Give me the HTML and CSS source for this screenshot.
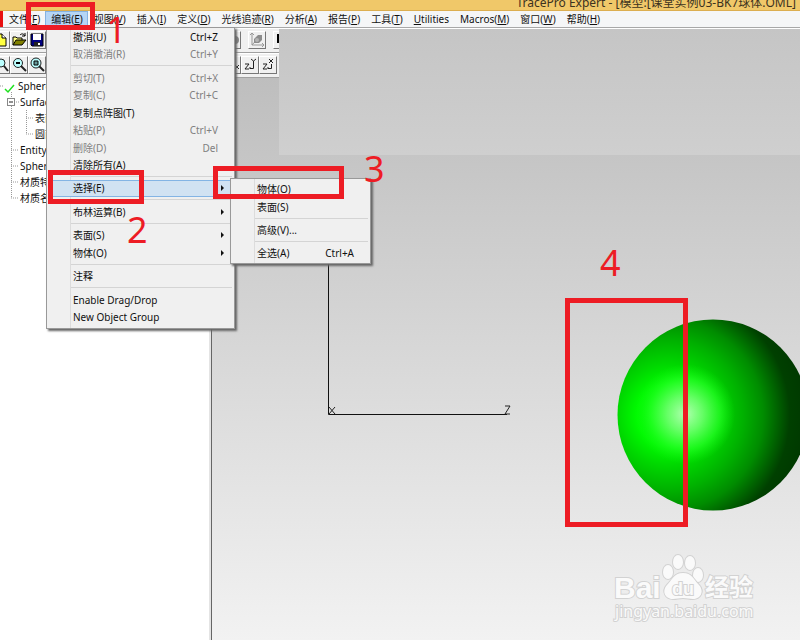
FILE: index.html
```html
<!DOCTYPE html>
<html lang="zh-CN">
<head>
<meta charset="utf-8">
<title>TracePro Expert</title>
<link rel="stylesheet" href="styles.css">
</head>
<body>
<div class="app">
  <header class="titlebar"><span>TracePro Expert - [模型:[课堂实例03-BK7球体.OML]</span></header>

  <nav class="menubar">
    <button>文件(<u>F</u>)</button>
    <button class="open">编辑(<u>E</u>)</button>
    <button>视图(<u>V</u>)</button>
    <button>插入(<u>I</u>)</button>
    <button>定义(<u>D</u>)</button>
    <button>光线追迹(<u>R</u>)</button>
    <button>分析(<u>A</u>)</button>
    <button>报告(<u>P</u>)</button>
    <button>工具(<u>T</u>)</button>
    <button><u>U</u>tilities</button>
    <button>Macros(<u>M</u>)</button>
    <button>窗口(<u>W</u>)</button>
    <button>帮助(<u>H</u>)</button>
  </nav>

  <div class="toolbar">
    <div class="tools">
      <button aria-label="新建"><svg viewBox="0 0 16 16"><path d="M3 2h6l4 4v8H3z" fill="#ffff40" stroke="#000"/><path d="M9 2v4h4" fill="#fff" stroke="#000"/></svg></button>
      <button aria-label="打开"><svg viewBox="0 0 16 16"><path d="M2 13V5h3l1 1h5v3" fill="#ffff80" stroke="#000"/><path d="M2 13l3-5h10l-4 5z" fill="#808000" stroke="#000"/><path d="M9 3c2-2 4-1 5 1m0-3v3h-3" fill="none" stroke="#000"/></svg></button>
      <button aria-label="保存"><svg viewBox="0 0 16 16"><path d="M2 2h12v12H3l-1-1z" fill="#000080" stroke="#000"/><path d="M4 2h8v6H4z" fill="#fff"/><path d="M5 10h6v4H5z" fill="#222"/><path d="M9 11h2v2H9z" fill="#fff"/></svg></button>
    </div>
    <div class="tools">
      <button aria-label="光线"><svg viewBox="0 0 16 16"><circle cx="11" cy="8" r="4" fill="#888"/></svg></button>
      <button aria-label="渲染" class="spaced"><svg viewBox="0 0 16 16"><path d="M3 1v12h12M1 3l2-2 2 2M13 11l2 2-2 2M3 13l9-10" fill="none" stroke="#999"/><path d="M5 7l4-4h4v5l-3 3H5z" fill="#8c8c8c"/><circle cx="8" cy="8" r="2" fill="#b4b4b4"/></svg></button>
      <button aria-label="颜色" class="spaced"><svg viewBox="0 0 16 16"><path d="M3 2h9v9H3z" fill="#000"/></svg></button>
    </div>
  </div>
  <div class="toolbar">
    <div class="tools">
      <button aria-label="缩放"><svg viewBox="0 0 16 16"><circle cx="8" cy="6" r="4" fill="#bff" stroke="#222"/><path d="M11 9l4 5" stroke="#222" stroke-width="2"/></svg></button>
      <button aria-label="缩小"><svg viewBox="0 0 16 16"><circle cx="7" cy="6" r="4.500" fill="#bff" stroke="#222"/><path d="M10 9l5 5" stroke="#222" stroke-width="2"/><path d="M5 6h4" stroke="#000" stroke-width="2"/></svg></button>
      <button aria-label="全部缩放"><svg viewBox="0 0 16 16"><circle cx="7" cy="6" r="5" fill="#bff" stroke="#222"/><path d="M10 9l5 5" stroke="#222" stroke-width="2"/><path d="M5 4h4v4H5z" fill="#699" stroke="#000"/></svg></button>
    </div>
    <div class="tools">
      <button aria-label="XY 视图"><svg viewBox="0 0 16 16"><path d="M11 8l4 4m0-4l-4 4" stroke="#222"/></svg></button>
      <button aria-label="YZ 视图"><svg viewBox="0 0 16 16"><path d="M3 7h4l-4 5h4M8 11.500h3.500V6M8 10v2M9 2l2.500 2v3M14 2l-2.500 2" fill="none" stroke="#222"/></svg></button>
      <button aria-label="XZ 视图"><svg viewBox="0 0 16 16"><path d="M3 7h4l-4 5h4M8 11.500h3.500V7M8 10v2M9 2l4 4M13 2l-4 4" fill="none" stroke="#222"/></svg></button>
    </div>
  </div>

  <main class="workspace">
    <aside class="tree">
      <svg class="tree-lines" viewBox="0 0 50 130" width="50" height="130">
        <g fill="none" stroke="#999" stroke-dasharray="1 1"><path d="M0 8h4M11.500 14v106M11 72h8M11 88h8M11 104h8M11 120h8M16 24h3M26.500 32v24M26 40h8M26 56h8"/></g>
        <path d="M5 11l3 3 6-7" fill="none" stroke="#1fe01f" stroke-width="1.500"/>
        <rect x="7.500" y="20.500" width="7" height="7" fill="#fff" stroke="#888"/><path d="M9 24h4" stroke="#222"/>
      </svg>
      <ul>
        <li class="root">Sphere 1</li>
        <li>Surfaces</li>
        <li class="leaf">表面 0</li>
        <li class="leaf">圆面 1</li>
        <li>Entity</li>
        <li>Sphere</li>
        <li>材质特性</li>
        <li>材质名称</li>
      </ul>
    </aside>
    <section class="viewport">
      <svg class="scene" viewBox="0 0 588 562" width="588" height="562">
        <defs>
          <radialGradient id="body" gradientUnits="userSpaceOnUse" cx="456" cy="337" r="140">
            <stop offset="0" stop-color="#00ff00"/><stop offset=".22" stop-color="#00fc00"/>
            <stop offset=".36" stop-color="#00d800"/><stop offset=".54" stop-color="#00b000"/>
            <stop offset=".68" stop-color="#008c00"/><stop offset=".78" stop-color="#006400"/>
            <stop offset=".87" stop-color="#004000"/><stop offset="1" stop-color="#003800"/>
          </radialGradient>
          <radialGradient id="shine" gradientUnits="userSpaceOnUse" cx="473" cy="336" r="50">
            <stop offset="0" stop-color="#b4ffb4"/><stop offset=".35" stop-color="#80ff80" stop-opacity=".8"/>
            <stop offset=".7" stop-color="#28ff28" stop-opacity=".7"/><stop offset="1" stop-color="#10f010" stop-opacity="0"/>
          </radialGradient>
        </defs>
        <path d="M116.500 100v236.500H295" fill="none" stroke="#111"/>
        <path d="M117 329l6 7m0-7l-6 7M293 328h5l-5 8h5" fill="none" stroke="#222"/>
        <circle cx="501" cy="337" r="95.500" fill="url(#body)"/>
        <circle cx="473" cy="336" r="50" fill="url(#shine)"/>
        <g class="watermark">
          <text x="402" y="520" class="brand">Bai</text>
          <ellipse cx="456" cy="494" rx="5" ry="7"/>
          <ellipse cx="466" cy="484" rx="5" ry="7"/>
          <ellipse cx="478" cy="485" rx="5" ry="7"/>
          <ellipse cx="486" cy="497" rx="5" ry="7"/>
          <path d="M471 495c9 0 10 6 16 12 6 7 1 14-6 14-4 0-6-1-10-1s-6 1-10 1c-7 0-12-7-6-14 6-6 7-12 16-12z"/>
          <text x="460" y="517" class="du">du</text>
          <text x="493" y="518" class="cn">经验</text>
          <text x="403" y="539" class="url">jingyan.baidu.com</text>
        </g>
      </svg>
    </section>
  </main>
  <div class="model-pane"></div>

  <div class="menu edit-menu">
    <button>撤消(U)<kbd>Ctrl+Z</kbd></button>
    <button disabled>取消撤消(R)<kbd>Ctrl+Y</kbd></button>
    <hr>
    <button disabled>剪切(T)<kbd>Ctrl+X</kbd></button>
    <button disabled>复制(C)<kbd>Ctrl+C</kbd></button>
    <button>复制点阵图(T)</button>
    <button disabled>粘贴(P)<kbd>Ctrl+V</kbd></button>
    <button disabled>删除(D)<kbd>Del</kbd></button>
    <button>清除所有(A)</button>
    <hr>
    <button class="more active">选择(E)</button>
    <hr>
    <button class="more">布林运算(B)</button>
    <hr>
    <button class="more">表面(S)</button>
    <button class="more">物体(O)</button>
    <hr>
    <button>注释</button>
    <hr>
    <button>Enable Drag/Drop</button>
    <button>New Object Group</button>
  </div>

  <div class="menu select-menu">
    <button>物体(O)</button>
    <button>表面(S)</button>
    <hr>
    <button>高级(V)...</button>
    <hr>
    <button>全选(A)<kbd>Ctrl+A</kbd></button>
  </div>

  <div class="mark mark-1"></div>
  <div class="mark mark-2"></div>
  <div class="mark mark-3"></div>
  <div class="mark mark-4"></div>
  <span class="step step-1">1</span>
  <span class="step step-2">2</span>
  <span class="step step-3">3</span>
  <span class="step step-4">4</span>
</div>
</body>
</html>
```
FILE: styles.css
```css
* { box-sizing: border-box; }

body {
  margin: 0;
  font: 10px/16px "Noto Sans", "Noto Sans CJK SC", sans-serif;
  color: #111;
}

button {
  margin: 0;
  padding: 0;
  border: 0;
  background: none;
  font: inherit;
  color: inherit;
  white-space: nowrap;
}

.app {
  position: relative;
  display: flex;
  flex-direction: column;
  height: 100vh;
  overflow: hidden;
  background: #f0f0f0;
}

/* Title and menu bar */
.titlebar {
  display: flex;
  flex: none;
  align-items: flex-end;
  justify-content: flex-end;
  height: 11px;
  padding-right: 4px;
  overflow: hidden;
  border-bottom: 1px solid #dcae50;
  background: #f0c869;
  font-size: 12px;
  line-height: 14px;
  color: #3c3220;
  white-space: nowrap;
}

.menubar {
  display: flex;
  flex: none;
  height: 17px;
  padding-left: 3px;
  border-bottom: 1px solid #a8a8a8;
  background: linear-gradient(90deg, #e81010 3px, #f5f6f7 3px);
}

.menubar button { padding: 0 5px 0 6px; }
.menubar .open { background: #b5d5f5; box-shadow: inset 0 0 0 1px #84b2e2; }

/* Toolbars */
.toolbar {
  display: flex;
  flex: none;
  gap: 177px;
  height: 25px;
  padding-top: 2px;
  border-top: 1px solid #fff;
  border-bottom: 1px solid #a0a0a0;
  overflow: hidden;
}

.tools { display: flex; flex: none; }
.tools:first-child { margin-left: -8px; }

.tools button {
  width: 18px;
  height: 18px;
  border: 1px solid;
  border-color: #fff #777 #777 #fff;
}

.tools .spaced { margin-left: 7px; }
.tools svg { display: block; width: 16px; height: 16px; }

/* Model tree and 3D view */
.workspace {
  display: flex;
  flex: 1;
  min-height: 0;
}

.tree {
  position: relative;
  flex: none;
  width: 212px;
  border-right: 1px solid #666;
  box-shadow: inset -2px 0 #e4e4e4;
  background: #fff;
}

.tree-lines { position: absolute; left: 0; top: 0; }
.tree ul { margin: 0; padding: 0; list-style: none; }
.tree li { padding-left: 20px; }
.tree .root { padding-left: 18px; }
.tree .leaf { padding-left: 35px; }

.viewport {
  position: relative;
  flex: 1;
  overflow: hidden;
  background: linear-gradient(#bebebe, #f2f2f2);
}

.scene { position: absolute; left: 0; top: 0; }

.model-pane {
  position: absolute;
  left: 279px;
  right: 0;
  top: 29px;
  height: 126px;
  background: linear-gradient(#c5c5c5, #cfcfcf);
}

.watermark { fill: #fafafa; stroke: #d2d2d2; stroke-width: 2px; paint-order: stroke; }
.brand { font: bold 30px "Liberation Sans", sans-serif; }
.du { font: bold 18px "Liberation Sans", sans-serif; }
.cn { font: bold 24px "Noto Sans CJK SC", sans-serif; }
.url { font: 16px "Noto Sans", sans-serif; }

/* Drop-down menus */
.menu {
  position: absolute;
  display: flex;
  flex-direction: column;
  border: 1px solid #999;
  background: linear-gradient(90deg, #f0f0f0 23px, #dcdcdc 23px, #dcdcdc 24px, #f0f0f0 24px);
  box-shadow: 2px 2px 2px #666;
}

.edit-menu { left: 46px; top: 27px; width: 189px; height: 302px; padding-bottom: 2px; }
.select-menu { left: 230px; top: 178px; width: 141px; padding: 1px 0; }

.menu button {
  position: relative;
  display: flex;
  flex: 1 1 18px;
  align-items: center;
  justify-content: space-between;
  min-height: 0;
  margin: 0 2px;
  padding: 0 14px 0 24px;
}

.menu button:disabled { color: #808080; }
.menu kbd { font: inherit; }

.menu hr {
  flex: none;
  width: auto;
  height: 1px;
  margin: 2px 2px 2px 24px;
  border: 0;
  background: #d4d4d4;
}

.edit-menu hr { margin-bottom: 3px; }
.menu .active { background: #d1e2f2; box-shadow: inset 0 0 0 1px #84b4e4; }

.more::after {
  position: absolute;
  right: 8px;
  border: 3px solid transparent;
  border-left-color: #111;
  border-right-width: 0;
  content: "";
}

/* Step callouts */
.mark { position: absolute; border: 5px solid #ed1c24; }
.mark-1 { left: 26px; top: 2px; width: 69px; height: 28px; }
.mark-2 { left: 48px; top: 170px; width: 96px; height: 34px; }
.mark-3 { left: 213px; top: 166px; width: 131px; height: 33px; }
.mark-4 { left: 565px; top: 298px; width: 123px; height: 229px; }

.step {
  position: absolute;
  font-size: 36px;
  line-height: 36px;
  color: #ed1c24;
}

.step-1 { left: 106px; top: 12px; }
.step-2 { left: 127px; top: 212px; }
.step-3 { left: 364px; top: 151px; }
.step-4 { left: 600px; top: 245px; }
```
